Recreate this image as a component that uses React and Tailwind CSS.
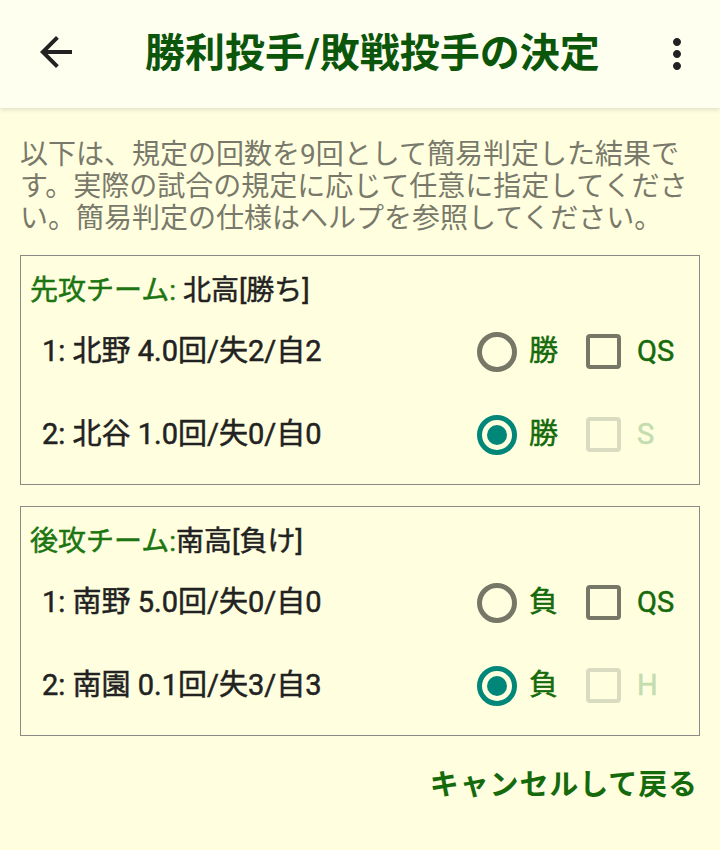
import React from 'react';

const font = "font-['Roboto','Noto_Sans_CJK_JP',sans-serif]";
const semi = '[-webkit-text-stroke:0.5px_currentColor]';

function Radio({ checked }) {
  return (
    <span
      className={
        'flex h-[40px] w-[40px] items-center justify-center rounded-full border-[5px] ' +
        (checked ? 'border-[#00877a]' : 'border-[#777768]')
      }
    >
      {checked && <span className="h-[20px] w-[20px] rounded-full bg-[#00877a]" />}
    </span>
  );
}

function Check({ disabled }) {
  return (
    <span
      className={
        'block h-[35px] w-[35px] rounded-[4px] border-[4px] ' +
        (disabled ? 'border-[#dadcc2]' : 'border-[#777768]')
      }
    />
  );
}

function PitcherRow({ text, mark, selected, flag, disabled }) {
  return (
    <div className={'flex h-[83px] items-center pl-[21px] ' + semi}>
      <span className="flex-1 text-[29px] leading-none text-[#222]">{text}</span>
      <Radio checked={selected} />
      <span className="ml-[12px] w-[57px] text-[29px] leading-none text-[#156a0c]">{mark}</span>
      <Check disabled={disabled} />
      <span
        className={
          'ml-[16px] w-[62px] text-[29px] leading-none ' +
          (disabled ? 'text-[#c4dcae]' : 'text-[#156a0c]')
        }
      >
        {flag}
      </span>
    </div>
  );
}

function TeamBox({ label, team, rows }) {
  return (
    <div className="border border-[#8a8a84] pt-[16px] pb-[8px]">
      <div className={'h-[38px] pl-[9px] text-[28px] leading-[38px] whitespace-pre ' + semi}>
        <span className="text-[#1d7512]">{label}</span>
        <span className="text-[#222]">{team}</span>
      </div>
      {rows.map((r, i) => (
        <PitcherRow key={i} {...r} />
      ))}
    </div>
  );
}

export default function App() {
  return (
    <div className={'min-h-[850px] w-[720px] bg-[#ffffdf] ' + font}>
      <header className="relative flex h-[108px] items-center bg-[#fffff0] shadow-[0_2px_4px_rgba(0,0,0,0.12)]">
        <svg viewBox="0 0 24 24" className="ml-[32px] h-[48px] w-[48px] -mt-[4px]" fill="#222">
          <path d="M20 11H7.83l5.59-5.59L12 4l-8 8 8 8 1.41-1.41L7.83 13H20v-2z" />
        </svg>
        <h1 className="ml-[65px] flex-1 text-[40px] font-bold leading-none text-[#0b560b]">
          勝利投手/敗戦投手の決定
        </h1>
        <svg viewBox="0 0 24 24" className="mr-[19px] h-[48px] w-[48px]" fill="#222">
          <path d="M12 8c1.1 0 2-.9 2-2s-.9-2-2-2-2 .9-2 2 .9 2 2 2zm0 2c-1.1 0-2 .9-2 2s.9 2 2 2 2-.9 2-2-.9-2-2-2zm0 6c-1.1 0-2 .9-2 2s.9 2 2 2 2-.9 2-2-.9-2-2-2z" />
        </svg>
      </header>

      <main className="px-5 pt-[31px]">
        <p className="text-[28px] leading-[32px] text-[#79796b]">
          以下は、規定の回数を9回として簡易判定した結果です。実際の試合の規定に応じて任意に指定してください。簡易判定の仕様はヘルプを参照してください。
        </p>

        <div className="mt-[20px] flex flex-col gap-[21px]">
          <TeamBox
            label="先攻チーム: "
            team="北高[勝ち]"
            rows={[
              { text: '1: 北野 4.0回/失2/自2', mark: '勝', selected: false, flag: 'QS', disabled: false },
              { text: '2: 北谷 1.0回/失0/自0', mark: '勝', selected: true, flag: 'S', disabled: true },
            ]}
          />
          <TeamBox
            label="後攻チーム:"
            team="南高[負け]"
            rows={[
              { text: '1: 南野 5.0回/失0/自0', mark: '負', selected: false, flag: 'QS', disabled: false },
              { text: '2: 南園 0.1回/失3/自3', mark: '負', selected: true, flag: 'H', disabled: true },
            ]}
          />
        </div>

        <div className="mt-[31px] flex justify-end">
          <button className="mr-[2px] text-[29px] font-bold leading-[36px] tracking-[0.9px] text-[#156a0c]">
            キャンセルして戻る
          </button>
        </div>
      </main>
    </div>
  );
}
